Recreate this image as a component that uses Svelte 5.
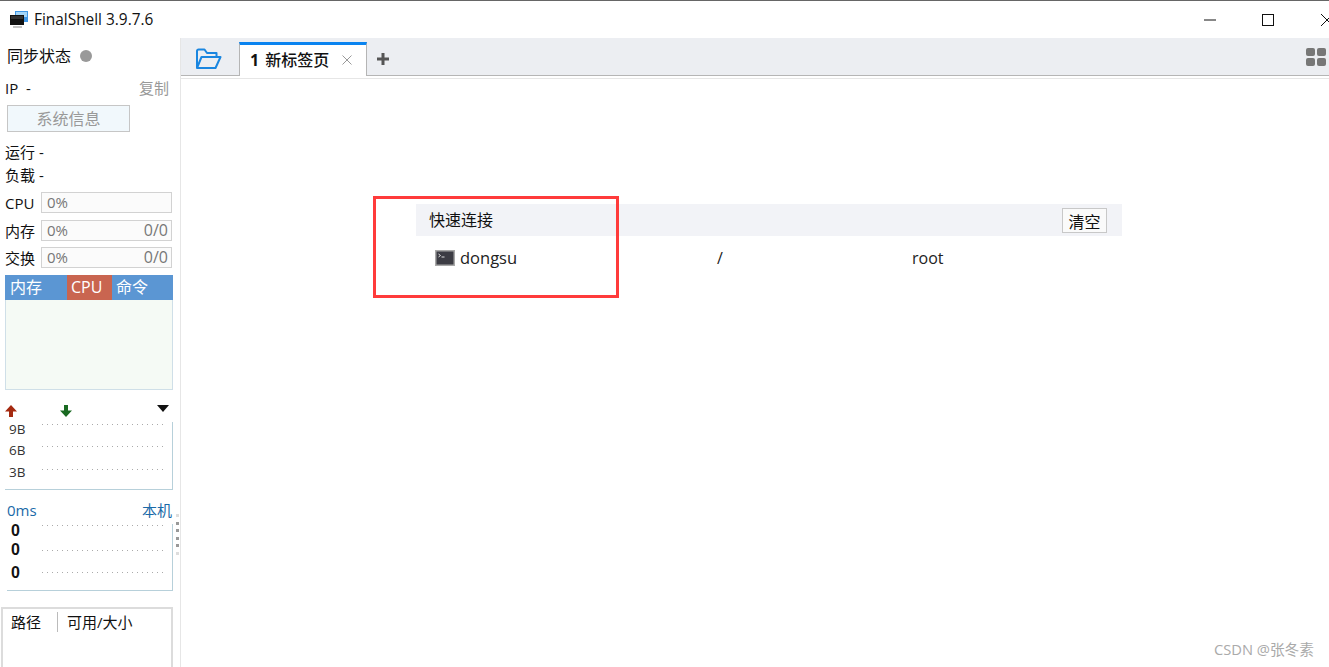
<script>
	const meters = [
		{ label: 'CPU', pct: '0%', size: '' },
		{ label: '内存', pct: '0%', size: '0/0' },
		{ label: '交换', pct: '0%', size: '0/0' }
	];
	const netRows = [
		{ label: '9B', h: 22, top: 0 },
		{ label: '6B', h: 23, top: -1 },
		{ label: '3B', h: 23, top: -2 }
	];
	const pingRows = [
		{ label: '0', h: 25, top: -1 },
		{ label: '0', h: 22, top: -7 },
		{ label: '0', h: 20, top: -6 }
	];
</script>

<div class="window">
	<header class="titlebar">
		<svg class="logo" viewBox="0 0 18 18">
			<rect x="5" y="0" width="13" height="11" fill="#3f97e6" />
			<rect x="6" y="1" width="11" height="5" fill="#a3d5f8" />
			<rect x="0" y="4" width="14" height="10" fill="#111" />
			<rect x="1" y="5" width="12" height="3" fill="#333" />
			<rect x="3" y="15" width="9" height="2" fill="#c4c4c4" />
		</svg>
		<span class="app-name">FinalShell 3.9.7.6</span>
		<div class="win-controls">
			<svg viewBox="0 0 12 12" class="min"><path d="M0 6h12" /></svg>
			<svg viewBox="0 0 12 12" class="max"><rect x="0.5" y="0.5" width="11" height="11" /></svg>
			<svg viewBox="0 0 12 12" class="close"><path d="M0 0l12 12M0 12L12 0" /></svg>
		</div>
	</header>

	<div class="body">
		<aside class="sidebar">
			<div class="sync">同步状态 <i class="dot"></i></div>
			<div class="ip-row"><span>IP&nbsp; -</span><span class="copy">复制</span></div>
			<button class="sysinfo">系统信息</button>
			<div class="stat first">运行 -</div>
			<div class="stat">负载 -</div>

			<div class="meters">
				{#each meters as m}
					<div class="meter">
						<span class="meter-label">{m.label}</span>
						<div class="meter-bar"><span>{m.pct}</span><span class="meter-size">{m.size}</span></div>
					</div>
				{/each}
			</div>

			<div class="proc">
				<div class="proc-tabs">
					<span class="t-mem">内存</span>
					<span class="t-cpu">CPU</span>
					<span class="t-cmd">命令</span>
				</div>
				<div class="proc-body"></div>
			</div>

			<div class="arrows">
				<svg viewBox="0 0 12 12"><path d="M6 0L12 6.500H8V12H4V6.500H0z" fill="#a52a10" /></svg>
				<svg viewBox="0 0 12 12"><path d="M6 12L12 5.500H8V0H4V5.500H0z" fill="#1a6a22" /></svg>
				<svg class="caret" viewBox="0 0 12 7"><path d="M0 0H12L6 7z" fill="#111" /></svg>
			</div>

			<div class="chart net">
				{#each netRows as r}
					<div class="chart-row" style="height: {r.h}px">
						<span class="chart-label" style="margin-top: {r.top}px">{r.label}</span>
						<i class="dots"></i>
					</div>
				{/each}
			</div>

			<div class="ping-head"><span>0ms</span><span>本机</span></div>
			<div class="chart ping">
				{#each pingRows as r}
					<div class="chart-row" style="height: {r.h}px">
						<span class="chart-label big" style="margin-top: {r.top}px">{r.label}</span>
						<i class="dots"></i>
					</div>
				{/each}
			</div>

			<div class="files">
				<span class="col-path">路径</span>
				<span class="col-free">可用/大小</span>
			</div>

			<div class="grip"><i></i><i></i><i></i><i></i><i></i><i></i></div>
		</aside>

		<main class="main">
			<div class="tabbar">
				<svg class="folder" viewBox="0 0 28 22" fill="none" stroke="#1a86e0" stroke-width="2" stroke-linejoin="round">
					<path d="M3 20V3a1.500 1.500 0 0 1 1.500-1.500h6L13 5h9.500V9" />
					<path d="M3 20L7.500 9H26.500L21.500 20z" />
				</svg>
				<div class="tab">
					<span class="tab-title"><b>1</b>新标签页</span>
					<svg class="tab-x" viewBox="0 0 10 10"><path d="M0.500 0.500l9 9M0.500 9.500l9-9" /></svg>
				</div>
				<svg class="plus" viewBox="0 0 12 12"><path d="M6 0v12M0 6h12" /></svg>
				<svg class="layout" viewBox="0 0 20 18">
					<rect x="0" y="0" width="9" height="8" rx="2" />
					<rect x="11" y="0" width="9" height="8" rx="2" />
					<rect x="0" y="10" width="9" height="8" rx="2" />
					<rect x="11" y="10" width="9" height="8" rx="2" />
				</svg>
			</div>

			<section class="content">
				<div class="quick">
					<div class="quick-head">
						<span class="quick-title">快速连接</span>
						<button class="clear">清空</button>
					</div>
					<div class="quick-row">
						<span class="host">
							<svg class="term" viewBox="0 0 20 16">
								<rect x="0.750" y="0.750" width="18.500" height="14.500" fill="#3c3c44" stroke="#a8a8a8" stroke-width="1.500" />
								<path d="M3.500 4l2 1.500-2 1.500M6.500 7h3" stroke="#ddd" fill="none" />
							</svg>
							<span class="host-name">dongsu</span>
						</span>
						<span class="path">/</span>
						<span class="user">root</span>
					</div>
				</div>
				<div class="highlight"></div>
			</section>
		</main>
	</div>
	<span class="watermark">CSDN @张冬素</span>
</div>

<style>
	:global(body) {
		margin: 0;
		background: #fff;
	}

	.window {
		position: relative;
		width: 1329px;
		height: 667px;
		overflow: hidden;
		box-sizing: border-box;
		border-top: 1px solid #666;
		color: #111;
		font-family: "Open Sans", "Noto Sans CJK SC", sans-serif;
		font-size: 15px;
	}

	.titlebar {
		display: flex;
		align-items: center;
		height: 37px;
		padding-left: 10px;
	}

	.logo {
		width: 18px;
		height: 18px;
		margin-right: 6px;
	}

	.app-name {
		font-size: 15.4px;
	}

	.win-controls {
		margin-left: auto;
		display: flex;
		align-items: center;
		margin-right: -4px;
	}

	.win-controls svg {
		fill: none;
		stroke: #111;
		stroke-width: 1;
		width: 12px;
		height: 12px;
	}

	.win-controls .min {
		margin-right: 46px;
	}

	.win-controls .max {
		margin-right: 47px;
	}

	.body {
		display: flex;
		height: 629px;
	}

	.sidebar {
		position: relative;
		width: 181px;
		flex-shrink: 0;
		box-sizing: border-box;
		border-right: 1px solid #e6e6e6;
	}

	.sync {
		display: flex;
		align-items: center;
		gap: 9px;
		height: 34px;
		margin-bottom: 1px;
		padding-left: 7px;
		font-size: 16px;
	}

	.dot {
		width: 12px;
		height: 12px;
		border-radius: 50%;
		background: #999;
		margin-top: 1px;
	}

	.ip-row {
		display: flex;
		justify-content: space-between;
		height: 29px;
		align-items: center;
		margin-bottom: 3px;
		padding: 0 11px 0 5px;
	}

	.copy {
		color: #999;
	}

	.sysinfo {
		display: block;
		width: 123px;
		height: 27px;
		margin-left: 7px;
		padding: 0 0 3px;
		background: #f1f8fc;
		border: 1px solid #c6c6c6;
		color: #999;
		font: inherit;
		font-size: 16px;
	}

	.stat {
		height: 23px;
		line-height: 23px;
		padding-left: 5px;
	}

	.stat.first {
		margin-top: 9px;
	}

	.meters {
		display: flex;
		flex-direction: column;
		gap: 6px;
		margin-top: 5px;
	}

	.meter {
		display: flex;
		align-items: center;
		padding-left: 5px;
	}

	.meter:nth-child(2) {
		margin-top: 1px;
	}

	.meter-label {
		width: 36px;
		flex-shrink: 0;
	}

	.meter-bar {
		display: flex;
		justify-content: space-between;
		width: 131px;
		height: 21px;
		box-sizing: border-box;
		padding: 0 3px 0 5px;
		line-height: 19px;
		border: 1px solid #d2d2d2;
		background: #fbfbfb;
		color: #777;
	}

	.meter-size {
		font-size: 16px;
	}

	.proc {
		margin: 7px 0 0 5px;
		width: 168px;
	}

	.proc-tabs {
		display: flex;
		height: 25px;
		line-height: 25px;
		background: #5b96d3;
		color: #fff;
		font-size: 16px;
	}

	.proc-tabs span {
		padding-left: 4px;
		box-sizing: border-box;
	}

	.proc-tabs .t-mem {
		width: 62px;
		padding-left: 5px;
	}

	.t-cpu {
		width: 45px;
		background: #c96550;
	}

	.proc-body {
		height: 90px;
		box-sizing: border-box;
		background: #f5faf5;
		border: 1px solid #cfdfe8;
		border-top: 0;
	}

	.arrows {
		display: flex;
		align-items: flex-start;
		height: 32px;
		box-sizing: border-box;
		padding: 15px 11px 0 5px;
	}

	.arrows svg {
		width: 12px;
		height: 12px;
	}

	.arrows svg:nth-child(2) {
		margin-left: 43px;
	}

	.arrows .caret {
		margin-left: auto;
		height: 7px;
	}

	.chart {
		box-sizing: border-box;
		border-right: 1px solid #b7d0da;
		border-bottom: 1px solid #b7d0da;
		width: 168px;
		margin-left: 5px;
	}

	.chart.net {
		height: 68px;
	}

	.chart.ping {
		width: 166px;
		margin-left: 7px;
		height: 67px;
	}

	.chart-row {
		display: flex;
		align-items: flex-start;
	}

	.chart-label {
		width: 37px;
		padding-left: 4px;
		box-sizing: border-box;
		flex-shrink: 0;
		line-height: 14px;
		font-size: 13.5px;
		color: #333;
	}

	.chart-label.big {
		width: 35px;
		padding-left: 4px;
		font-family: "Liberation Sans", sans-serif;
		font-size: 16px;
		font-weight: 700;
		color: #111;
		line-height: 16px;
	}

	.dots {
		flex: 1;
		margin: 2px 5px 0 0;
		height: 1px;
		background: repeating-linear-gradient(to right, #aaa 0 1px, transparent 1px 5px);
	}

	.ping .dots {
		margin-top: 1px;
	}

	.ping-head {
		display: flex;
		justify-content: space-between;
		height: 34px;
		align-items: flex-end;
		padding: 0 8px 4px 7px;
		color: #1a6aa8;
		box-sizing: border-box;
		line-height: 20px;
	}

	.files {
		display: flex;
		align-items: flex-start;
		height: 60px;
		width: 172px;
		box-sizing: border-box;
		margin: 16px 0 0 1px;
		padding-top: 3px;
		border: 2px solid #dcdcdc;
		border-bottom: 0;
	}

	.col-path {
		width: 55px;
		padding-left: 8px;
		box-sizing: border-box;
		border-right: 1px solid #bbb;
		height: 20px;
		line-height: 20px;
	}

	.col-free {
		padding-left: 9px;
		line-height: 20px;
	}

	.grip {
		position: absolute;
		right: 1px;
		top: 476px;
		display: flex;
		flex-direction: column;
		gap: 4.5px;
	}

	.grip i {
		width: 3px;
		height: 3px;
		background: #999;
	}

	.grip i:first-child,
	.grip i:last-child {
		background: #ddd;
	}

	.main {
		flex: 1;
		min-width: 0;
		display: flex;
		flex-direction: column;
	}

	.tabbar {
		position: relative;
		display: flex;
		align-items: flex-end;
		height: 38px;
		box-sizing: border-box;
		background: #eceef2;
		border-bottom: 1px solid #b5b5b5;
		flex-shrink: 0;
	}

	.folder {
		width: 28px;
		height: 22px;
		margin: 0 17px 5px 13px;
	}

	.tab {
		display: flex;
		align-items: center;
		width: 128px;
		height: 34px;
		box-sizing: border-box;
		margin-bottom: -1px;
		background: #fff;
		border-top: 3px solid #0a84f0;
		border-left: 1px solid #b5b5b5;
		border-right: 1px solid #b5b5b5;
		padding: 0 0 4px 10px;
		font-size: 16px;
	}

	.tab-title {
		font-weight: 500;
		white-space: nowrap;
	}

	.tab-title b {
		margin-right: 6px;
	}

	.tab-x {
		width: 10px;
		height: 10px;
		margin: 2px 0 0 13px;
		stroke: #999;
		stroke-width: 1;
		fill: none;
	}

	.plus {
		width: 12px;
		height: 12px;
		margin: 0 0 10px 10px;
		stroke: #555;
		stroke-width: 3;
		fill: none;
	}

	.layout {
		width: 20px;
		height: 18px;
		margin: 0 3px 9px auto;
		fill: #777;
	}

	.content {
		position: relative;
		flex: 1;
		border-top: 1px solid #e6e6e6;
		margin-top: 2px;
	}

	.quick {
		width: 706px;
		margin: 125px 0 0 235px;
	}

	.quick-head {
		display: flex;
		align-items: center;
		justify-content: space-between;
		height: 32px;
		padding: 0 15px 0 13px;
		background: #f2f3f7;
		font-size: 16px;
	}

	.quick-title {
		margin-top: -2px;
	}

	.clear {
		width: 45px;
		height: 25px;
		padding: 0;
		background: #fafafa;
		border: 1px solid #c8c8c8;
		color: #111;
		font: inherit;
		font-size: 16px;
	}

	.quick-row {
		display: grid;
		grid-template-columns: 282px 195px auto;
		align-items: center;
		height: 44px;
		padding-left: 19px;
		font-size: 16px;
		color: #222;
	}

	.host {
		display: flex;
		align-items: center;
		gap: 5px;
	}

	.host-name {
		font-size: 16.5px;
		margin-top: -2px;
	}

	.term {
		width: 20px;
		height: 16px;
	}

	.highlight {
		position: absolute;
		left: 192px;
		top: 117px;
		width: 246px;
		height: 102px;
		box-sizing: border-box;
		border: 3px solid #ff3b3b;
		pointer-events: none;
	}

	.watermark {
		position: absolute;
		right: 15px;
		bottom: 8px;
		font-size: 14.7px;
		color: #aaa;
	}
</style>
